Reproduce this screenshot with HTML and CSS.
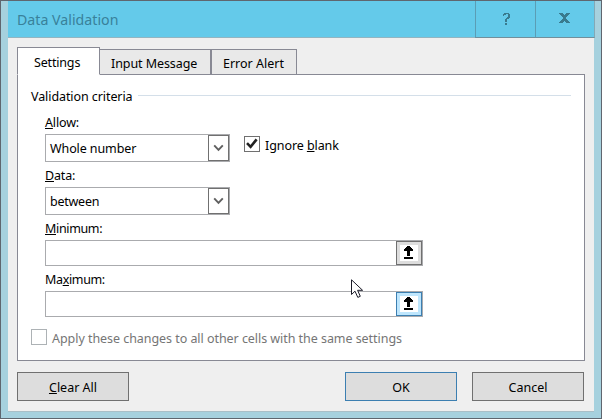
FILE: index.html
```html
<!DOCTYPE html>
<html lang="en">
<head>
<meta charset="utf-8">
<title>Data Validation</title>
<link rel="stylesheet" href="styles.css">
</head>
<body>
<div class="window">
  <header class="titlebar">
    <h1 class="title">Data Validation</h1>
    <button class="caption help" aria-label="Help"><svg width="8" height="12" viewBox="0 0 8 12" shape-rendering="crispEdges"><path d="M1 0h5v1H1zM0 1h3v1H0zM0 2h1v1H0zM5 1h2v3H5zM4 4h3v1H4zM3 5h3v1H3zM2 6h2v3H2zM2 10h2v2H2z"/></svg></button>
    <button class="caption close" aria-label="Close"><svg width="11" height="10" viewBox="0 0 11 10" shape-rendering="crispEdges"><path d="M0 0h4v1h1v1h1v-1h1v-1h4v1h-1v1h-1v1h-1v1h-1v2h1v1h1v1h1v1h1v1h-4v-1h-1v-1h-1v1h-1v1h-4v-1h1v-1h1v-1h1v-1h1v-2h-1v-1h-1v-1h-1v-1h-1z"/></svg></button>
  </header>
  <main class="body">
    <nav class="tabs">
      <div class="tab active"><span class="t-settings">Settings</span></div>
      <div class="tab input-tab"><span class="t-input">Input Message</span></div>
      <div class="tab error-tab"><span class="t-error">Error Alert</span></div>
    </nav>
    <section class="panel">
      <div class="legend"><span class="t-criteria">Validation criteria</span><i class="rule"></i></div>
      <div class="fields">
        <div class="label first"><span class="t-allow"><u>A</u>llow:</span></div>
        <div class="row">
          <div class="combo"><span class="t-whole">Whole number</span><button class="drop" aria-label="Open"><svg width="11" height="9" viewBox="0 0 11 9"><path d="M1.2 1.3L5.5 5.9L9.8 1.3" fill="none" stroke="#606060" stroke-width="1.9"/></svg></button></div>
          <label class="ignore"><span class="check"><svg width="12" height="12" viewBox="0 0 12 12"><path d="M1 5.2L4.6 8.8L10.6 1.4" fill="none" stroke="#212121" stroke-width="2.6"/></svg></span><span class="t-ignore">Ignore <u>b</u>lank</span></label>
        </div>
        <div class="label"><span class="t-data"><u>D</u>ata:</span></div>
        <div class="combo"><span class="t-between">between</span><button class="drop" aria-label="Open"><svg width="11" height="9" viewBox="0 0 11 9"><path d="M1.2 1.3L5.5 5.9L9.8 1.3" fill="none" stroke="#606060" stroke-width="1.9"/></svg></button></div>
        <div class="label"><span class="t-min"><u>M</u>inimum:</span></div>
        <div class="ref"><button class="pick" aria-label="Select range"><svg width="18" height="16" viewBox="0 0 18 16" shape-rendering="crispEdges"><path fill="#fff" d="M0 0h18v16H0z"/><path d="M7 1h3v1h1v1h1v1h1v2h-3v5H7V6H4V4h1V3h1V2h1zM4 12h9v2H4z"/></svg></button></div>
        <div class="label"><span class="t-max">Ma<u>x</u>imum:</span></div>
        <div class="ref"><button class="pick hot" aria-label="Select range"><svg width="18" height="16" viewBox="0 0 18 16" shape-rendering="crispEdges"><path fill="#fff" d="M0 0h18v16H0z"/><path d="M7 1h3v1h1v1h1v1h1v2h-3v5H7V6H4V4h1V3h1V2h1zM4 12h9v2H4z"/></svg></button></div>
      </div>
      <label class="apply"><span class="check off"></span><span class="t-apply">Apply these changes to all other cells with the same settings</span></label>
    </section>
    <footer class="actions">
      <button class="btn clear"><span><u>C</u>lear All</span></button>
      <button class="btn ok"><span>OK</span></button>
      <button class="btn"><span>Cancel</span></button>
    </footer>
  </main>
  <svg class="pointer" width="14" height="21" viewBox="0 0 14 21"><path d="M.5 .8V15.5L4 12.2L6.8 18.4L9.3 17.3L6.6 11.3H11.6Z" fill="#fff" stroke="#1b1b28"/></svg>
</div>
</body>
</html>
```
FILE: styles.css
```css
* { box-sizing: border-box; }

body {
  margin: 0;
  font: 12.5px/18px "Noto Sans", "Open Sans", sans-serif;
  color: #000;
}

button {
  margin: 0;
  padding: 0;
  font: inherit;
  color: inherit;
}

span { white-space: nowrap; }
svg { display: block; }

u {
  text-decoration: underline 1px;
  text-underline-offset: 1px;
  text-decoration-skip-ink: none;
}

.window {
  position: relative;
  width: 602px;
  height: 419px;
  padding: 0 7px;
  background: #a6d1de;
  border: 1px solid #5f666f;
}

.titlebar {
  display: flex;
  width: 587px;
  height: 37px;
  background: #64caea;
  border-bottom: 1px solid #93b5c1;
}

.title {
  flex: 1;
  margin: 0;
  padding: 6px 0 0 9px;
  font-size: 14.2px;
  font-weight: 400;
  line-height: 26px;
  color: #39819a;
}

.caption {
  display: flex;
  align-items: flex-start;
  width: 60px;
  height: 37px;
  background: none;
  border: solid #5b9db5;
  border-width: 0 0 1px 1px;
  border-bottom-color: #718f9b;
  fill: #397a8e;
}

.help { padding: 12px 0 0 27px; }
.close { padding: 12px 0 0 23px; border-right: 1px solid #83a9b6; }

.body {
  width: 586px;
  height: 374px;
  padding: 9px 9px 0;
  background: #efefef;
  border-bottom: 1px solid #a9bfc7;
}

.tabs {
  position: relative;
  display: flex;
  align-items: flex-end;
  height: 28px;
  margin-bottom: -1px;
}

.tab {
  height: 26px;
  background: #e9e9e9;
  border: 1px solid #888994;
}

.active {
  width: 83px;
  height: 28px;
  padding: 6px 0 0 16px;
  background: #fff;
  border-bottom-color: #fff;
}

.input-tab { width: 111px; padding: 5px 0 0 11px; border-left: 0; }
.error-tab { width: 86px; padding: 5px 0 0 11px; }

.panel {
  width: 568px;
  height: 287px;
  padding: 13px 13px 0;
  background: #fff;
  border: 1px solid #888994;
}

.legend {
  display: flex;
  align-items: flex-start;
  justify-content: space-between;
  height: 18px;
}

.rule { width: 433px; height: 1px; margin-top: 7px; background: #d4dfe9; }
.fields { padding-left: 14px; }
.label { height: 18px; margin: 5px 0 2px; }
.first { margin-top: 8px; }
.row { display: flex; height: 28px; }

.combo, .ref {
  display: flex;
  justify-content: space-between;
  background: #fff;
  border: 1px solid #aaabae;
}

.combo { width: 185px; height: 28px; padding-left: 4px; line-height: 27px; }

.drop {
  display: flex;
  width: 21px;
  height: 26px;
  padding: 8px 0 0 4px;
  background: #fff;
  border: 1px solid #707070;
}

.ignore { display: flex; margin: 2px 0 0 14px; gap: 5px; line-height: 19px; }

.check {
  width: 16px;
  height: 16px;
  padding: 1px;
  background: #fff;
  border: 1px solid #707070;
}

.ref { width: 378px; height: 26px; justify-content: flex-end; }

.pick {
  display: flex;
  width: 26px;
  height: 24px;
  padding: 3px;
  background: #ddd;
  border: 1px solid #707070;
}

.hot { background: #bee6fd; border-color: #3c7fb1; }
.apply { display: flex; gap: 5px; margin-top: 12px; line-height: 20px; color: #757575; }
.off { border-color: #adb2b5; }

.actions { display: flex; gap: 15px; width: 567px; margin-top: 11px; }

.btn {
  width: 112px;
  height: 29px;
  padding-top: 2px;
  background: #ddd;
  border: 1px solid #707070;
}

.clear { margin-right: auto; }
.ok { border-color: #3c7fb1; }

.t-settings { letter-spacing: -.17px; }
.t-input { letter-spacing: -.08px; }
.t-criteria { letter-spacing: -.08px; }
.t-allow, .t-data { letter-spacing: -.15px; }
.t-whole { letter-spacing: -.1px; }
.t-between { letter-spacing: -.25px; }
.t-min, .t-max { letter-spacing: -.35px; }
.t-ignore { letter-spacing: -.08px; }
.t-apply { letter-spacing: -.05px; }

.pointer { position: absolute; left: 350px; top: 278px; }
```
